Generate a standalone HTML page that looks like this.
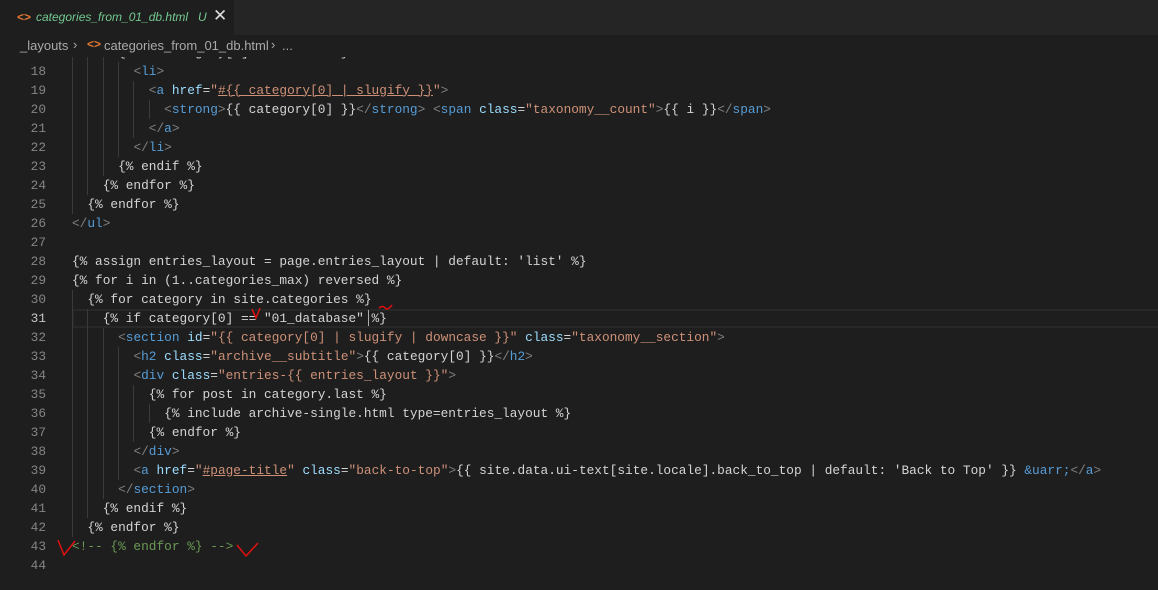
<!DOCTYPE html>
<html><head><meta charset="utf-8"><style>
*{margin:0;padding:0;box-sizing:border-box}
body{width:1158px;height:590px;background:#1e1e1e;overflow:hidden;position:relative;font-family:"Liberation Mono",monospace}
.tabbar{position:absolute;left:0;top:0;width:1158px;height:35px;background:#252526}
.tab{position:absolute;left:0;top:0;width:234px;height:35px;background:#1e1e1e;font-family:"Liberation Sans",sans-serif;font-size:12px}
.bc{position:absolute;left:0;top:35px;width:1158px;height:22px;background:#1e1e1e;font-family:"Liberation Sans",sans-serif;font-size:13px;color:#a9a9a9}
.ln{position:absolute;left:0;width:46px;text-align:right;font-size:12.8px;color:#858585;height:19px;line-height:19px}
.code{position:absolute;left:72px;height:19px;line-height:19px;font-size:12.8px;color:#d4d4d4;white-space:pre}
.g{position:absolute;width:1px;height:19px;background:#3a3a3a}
.p{color:#808080}.t{color:#569cd6}.a{color:#9cdcfe}.s{color:#ce9178}.c{color:#6a9955}.u{text-decoration:underline}
</style></head><body>
<div id="lines"></div>
<div class="bc"><span style="position:absolute;left:20px;top:3px">_layouts</span><span style="position:absolute;left:73px;top:2px">›</span><span style="position:absolute;left:87px;top:2px;color:#e37933;font-size:12px;font-weight:bold">&lt;&gt;</span><span style="position:absolute;left:104px;top:3px">categories_from_01_db.html</span><span style="position:absolute;left:271px;top:2px">›</span><span style="position:absolute;left:282px;top:3px">...</span></div>
<div class="tabbar"><div class="tab"><span style="position:absolute;left:17px;top:10px;color:#e37933;font-size:12px;font-weight:bold">&lt;&gt;</span><span style="position:absolute;left:36px;top:10px;color:#73c991;font-style:italic">categories_from_01_db.html</span><span style="position:absolute;left:198px;top:10px;color:#73c991;font-style:italic">U</span><span style="position:absolute;left:213px;top:6px;color:#ddd;font-size:17px">✕</span></div></div>
<svg style="position:absolute;left:0;top:0" width="1158" height="590">
<path d="M252 309 L256 318 L260 308" stroke="#e01010" stroke-width="1.5" fill="none"/>
<path d="M379 308 Q383 305 385 308 Q387 311 392 305" stroke="#e01010" stroke-width="1.5" fill="none"/>
<path d="M58 540 L64 555 L75 541" stroke="#e01010" stroke-width="1.5" fill="none"/>
<path d="M237 545 L246 556 L258 543" stroke="#e01010" stroke-width="1.5" fill="none"/>
</svg>
<script>
const L=[
[17,6,'<span>{% if category[1].size == i %}</span>'],
[18,8,'<span class=p>&lt;</span><span class=t>li</span><span class=p>&gt;</span>'],
[19,10,'<span class=p>&lt;</span><span class=t>a</span> <span class=a>href</span>=<span class=s>"<span class=u>#{{ category[0] | slugify }}</span>"</span><span class=p>&gt;</span>'],
[20,12,'<span class=p>&lt;</span><span class=t>strong</span><span class=p>&gt;</span>{{ category[0] }}<span class=p>&lt;/</span><span class=t>strong</span><span class=p>&gt;</span> <span class=p>&lt;</span><span class=t>span</span> <span class=a>class</span>=<span class=s>"taxonomy__count"</span><span class=p>&gt;</span>{{ i }}<span class=p>&lt;/</span><span class=t>span</span><span class=p>&gt;</span>'],
[21,10,'<span class=p>&lt;/</span><span class=t>a</span><span class=p>&gt;</span>'],
[22,8,'<span class=p>&lt;/</span><span class=t>li</span><span class=p>&gt;</span>'],
[23,6,'{% endif %}'],[24,4,'{% endfor %}'],[25,2,'{% endfor %}'],
[26,0,'<span class=p>&lt;/</span><span class=t>ul</span><span class=p>&gt;</span>'],
[27,0,''],
[28,0,"{% assign entries_layout = page.entries_layout | default: 'list' %}"],
[29,0,'{% for i in (1..categories_max) reversed %}'],
[30,2,'{% for category in site.categories %}'],
[31,4,'{% if category[0] == "01_database" %}'],
[32,6,'<span class=p>&lt;</span><span class=t>section</span> <span class=a>id</span>=<span class=s>"{{ category[0] | slugify | downcase }}"</span> <span class=a>class</span>=<span class=s>"taxonomy__section"</span><span class=p>&gt;</span>'],
[33,8,'<span class=p>&lt;</span><span class=t>h2</span> <span class=a>class</span>=<span class=s>"archive__subtitle"</span><span class=p>&gt;</span>{{ category[0] }}<span class=p>&lt;/</span><span class=t>h2</span><span class=p>&gt;</span>'],
[34,8,'<span class=p>&lt;</span><span class=t>div</span> <span class=a>class</span>=<span class=s>"entries-{{ entries_layout }}"</span><span class=p>&gt;</span>'],
[35,10,'{% for post in category.last %}'],
[36,12,'{% include archive-single.html type=entries_layout %}'],
[37,10,'{% endfor %}'],
[38,8,'<span class=p>&lt;/</span><span class=t>div</span><span class=p>&gt;</span>'],
[39,8,'<span class=p>&lt;</span><span class=t>a</span> <span class=a>href</span>=<span class=s>"<span class=u>#page-title</span>"</span> <span class=a>class</span>=<span class=s>"back-to-top"</span><span class=p>&gt;</span>{{ site.data.ui-text[site.locale].back_to_top | default: \'Back to Top\' }} <span class=t>&amp;uarr;</span><span class=p>&lt;/</span><span class=t>a</span><span class=p>&gt;</span>'],
[40,6,'<span class=p>&lt;/</span><span class=t>section</span><span class=p>&gt;</span>'],
[41,4,'{% endif %}'],[42,2,'{% endfor %}'],
[43,0,'<span class=c>&lt;!-- {% endfor %} --&gt;</span>'],
[44,0,'']];
let h='';const cw=7.68;
for(const [n,ind,c] of L){
 const top=61.5+(n-18)*19;
 if(n==31)h+=`<div style="position:absolute;left:72px;top:${top}px;width:1086px;height:19px;border:2px solid #282828;border-right:none"></div>`;
 h+=`<div class=ln style="top:${top}px;${n==31?'color:#c6c6c6':''}">${n}</div>`;
 for(let k=0;k<ind;k+=2)h+=`<div class=g style="left:${72+k*cw}px;top:${top}px"></div>`;
 h+=`<div class=code style="top:${top}px;left:${72+ind*cw}px">${c}</div>`;
}
h+=`<div style="position:absolute;left:368px;top:310px;width:1px;height:16px;background:#aeafad"></div>`;
document.getElementById('lines').innerHTML=h;
</script>
</body></html>
